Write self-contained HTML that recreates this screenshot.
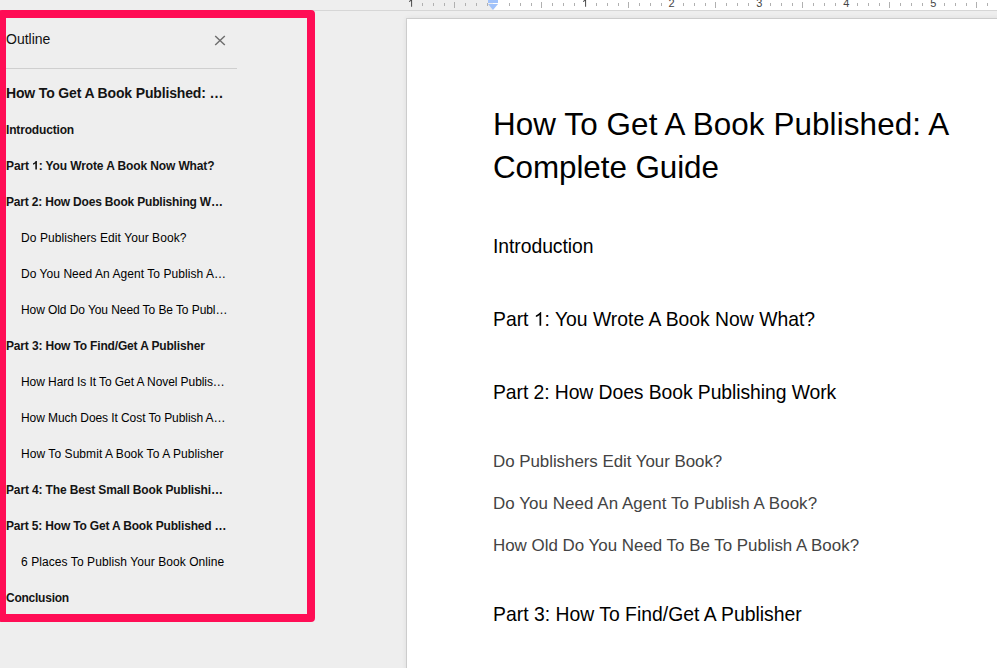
<!DOCTYPE html>
<html><head><meta charset="utf-8">
<style>
html,body{margin:0;padding:0;}
body{width:997px;height:668px;overflow:hidden;position:relative;background:#eeeeee;font-family:"Liberation Sans",sans-serif;}
.ruler{position:absolute;left:0;top:0;width:997px;height:10px;background:#eeeeee;}
.ruler .white{position:absolute;left:493px;top:0;right:0;height:10px;background:#fff;}
.rline{position:absolute;left:0;top:10px;width:997px;height:1px;background:#d6d6d6;}
.band{position:absolute;left:0;top:11px;width:997px;height:8px;background:#eeeeee;}
.tk{position:absolute;top:3px;width:1px;height:3px;background:#b0b0b0;}
.tk.big{top:2px;height:6px;}
.lab{position:absolute;top:-2.3px;width:20px;text-align:center;font-size:11px;line-height:11px;color:#444;}
.marker{position:absolute;left:488px;top:0;width:10px;height:3px;background:#a1c2fa;}
.tri{position:absolute;left:488px;top:4px;width:0;height:0;border-left:5px solid transparent;border-right:5px solid transparent;border-top:6px solid #a1c2fa;}
.page{position:absolute;left:407px;top:19px;width:700px;height:800px;background:#fff;box-shadow:0 0 0 1px rgba(0,0,0,0.10),0 0 5px 1px rgba(0,0,0,0.07);}
.dt{position:absolute;left:493px;white-space:nowrap;}
.frame{position:absolute;left:-2px;top:10px;width:301px;height:596px;border:8px solid #ff0d55;border-radius:4px;}
.title{position:absolute;left:6px;top:0;font-size:14px;line-height:14px;color:#111;}
.close{position:absolute;left:214px;top:35px;width:12px;height:11px;}
.one{position:absolute;top:0;}
.sep{position:absolute;left:6px;top:68px;width:231px;height:1px;background:#cfcfcf;}
.si{position:absolute;white-space:nowrap;color:#141414;}
.si.b{font-weight:bold;}
.si.r{color:#000;}
.g1{display:inline-block;width:0.5562em;height:0.7158em;vertical-align:baseline;fill:currentColor;}

</style></head><body>
<div class="ruler"><div class="white"></div>
<div class="tk" style="left:422px"></div>
<div class="tk" style="left:433px"></div>
<div class="tk" style="left:444px"></div>
<div class="tk big" style="left:454px"></div>
<div class="tk" style="left:465px"></div>
<div class="tk" style="left:476px"></div>
<div class="tk" style="left:487px"></div>
<div class="tk" style="left:509px"></div>
<div class="tk" style="left:520px"></div>
<div class="tk" style="left:531px"></div>
<div class="tk big" style="left:541px"></div>
<div class="tk" style="left:552px"></div>
<div class="tk" style="left:563px"></div>
<div class="tk" style="left:574px"></div>
<div class="tk" style="left:596px"></div>
<div class="tk" style="left:607px"></div>
<div class="tk" style="left:618px"></div>
<div class="tk big" style="left:628px"></div>
<div class="tk" style="left:639px"></div>
<div class="tk" style="left:650px"></div>
<div class="tk" style="left:661px"></div>
<div class="tk" style="left:683px"></div>
<div class="tk" style="left:694px"></div>
<div class="tk" style="left:705px"></div>
<div class="tk big" style="left:715px"></div>
<div class="tk" style="left:726px"></div>
<div class="tk" style="left:737px"></div>
<div class="tk" style="left:748px"></div>
<div class="tk" style="left:770px"></div>
<div class="tk" style="left:781px"></div>
<div class="tk" style="left:792px"></div>
<div class="tk big" style="left:802px"></div>
<div class="tk" style="left:813px"></div>
<div class="tk" style="left:824px"></div>
<div class="tk" style="left:835px"></div>
<div class="tk" style="left:857px"></div>
<div class="tk" style="left:868px"></div>
<div class="tk" style="left:879px"></div>
<div class="tk big" style="left:889px"></div>
<div class="tk" style="left:900px"></div>
<div class="tk" style="left:911px"></div>
<div class="tk" style="left:922px"></div>
<div class="tk" style="left:944px"></div>
<div class="tk" style="left:955px"></div>
<div class="tk" style="left:966px"></div>
<div class="tk big" style="left:976px"></div>
<div class="tk" style="left:987px"></div>
<svg class="one" style="left:407.59px;top:-0.874px" width="6.118" height="7.874" viewBox="0 0 1139 1466"><path fill="#444" transform="matrix(1 0 0 -1 0 1466)" d="M763 0L583 0L583 1147Q450 1010 196 928L196 1102Q400 1190 520 1300Q630 1400 680 1466L763 1466Z"/></svg>
<svg class="one" style="left:581.51px;top:-0.874px" width="6.118" height="7.874" viewBox="0 0 1139 1466"><path fill="#444" transform="matrix(1 0 0 -1 0 1466)" d="M763 0L583 0L583 1147Q450 1010 196 928L196 1102Q400 1190 520 1300Q630 1400 680 1466L763 1466Z"/></svg>
<div class="lab" style="left:661.59px">2</div>
<div class="lab" style="left:749.35px">3</div>
<div class="lab" style="left:836.31px">4</div>
<div class="lab" style="left:923.27px">5</div>
<div class="marker"></div><div class="tri"></div>
</div>
<div class="rline"></div>
<div class="band"></div>
<div class="page"></div>
<div class="dt" style="top:109.22px;font-size:31.4px;line-height:31.4px;color:#000;letter-spacing:0.103px">How To Get A Book Published: A</div>
<div class="dt" style="top:152.12px;font-size:31.4px;line-height:31.4px;color:#000;letter-spacing:-0.069px">Complete Guide</div>
<div class="dt" style="top:237.32px;font-size:19.35px;line-height:19.35px;color:#000;letter-spacing:-0.055px">Introduction</div>
<div class="dt" style="top:310.32px;font-size:19.35px;line-height:19.35px;color:#000;letter-spacing:-0.006px">Part <svg class="g1" style="margin-right:-0.006px" viewBox="0 0 1139 1466"><path transform="matrix(1 0 0 -1 0 1466)" d="M763 0L583 0L583 1147Q450 1010 196 928L196 1102Q400 1190 520 1300Q630 1400 680 1466L763 1466Z"/></svg>: You Wrote A Book Now What?</div>
<div class="dt" style="top:383.42px;font-size:19.35px;line-height:19.35px;color:#000;letter-spacing:-0.072px">Part 2: How Does Book Publishing Work</div>
<div class="dt" style="top:454.17px;font-size:16.93px;line-height:16.93px;color:#434343;letter-spacing:-0.043px">Do Publishers Edit Your Book?</div>
<div class="dt" style="top:496.07px;font-size:16.93px;line-height:16.93px;color:#434343;letter-spacing:0.068px">Do You Need An Agent To Publish A Book?</div>
<div class="dt" style="top:537.97px;font-size:16.93px;line-height:16.93px;color:#434343;letter-spacing:-0.005px">How Old Do You Need To Be To Publish A Book?</div>
<div class="dt" style="top:604.52px;font-size:19.35px;line-height:19.35px;color:#000;letter-spacing:0.015px">Part 3: How To Find/Get A Publisher</div>
<div class="title" style="top:32.15px">Outline</div>
<svg class="close" width="12" height="11" viewBox="0 0 12 11"><path d="M1.2 1.0 L10.8 10.0 M10.8 1.0 L1.2 10.0" stroke="#6e6e6e" stroke-width="1.45" fill="none"/></svg>
<div class="sep"></div>
<div class="si b" style="top:86.35px;left:6px;font-size:14px;line-height:14px;letter-spacing:-0.152px">How To Get A Book Published: …</div>
<div class="si b" style="top:123.74px;left:6px;font-size:12px;line-height:12px;letter-spacing:-0.164px">Introduction</div>
<div class="si b" style="top:159.74px;left:6px;font-size:12px;line-height:12px;letter-spacing:-0.118px">Part <svg class="g1" style="margin-right:-0.118px" viewBox="0 0 1139 1466"><path transform="matrix(1 0 0 -1 0 1466)" d="M841 0L566 0L566 1036Q400 880 172 818L172 1067Q300 1110 440 1200Q570 1300 618 1466L841 1466Z"/></svg>: You Wrote A Book Now What?</div>
<div class="si b" style="top:195.74px;left:6px;font-size:12px;line-height:12px;letter-spacing:-0.188px">Part 2: How Does Book Publishing W…</div>
<div class="si r" style="top:231.74px;left:21px;font-size:12px;line-height:12px;letter-spacing:0.071px">Do Publishers Edit Your Book?</div>
<div class="si r" style="top:267.74px;left:21px;font-size:12px;line-height:12px;letter-spacing:0.052px">Do You Need An Agent To Publish A…</div>
<div class="si r" style="top:303.74px;left:21px;font-size:12px;line-height:12px;letter-spacing:-0.079px">How Old Do You Need To Be To Publ…</div>
<div class="si b" style="top:339.74px;left:6px;font-size:12px;line-height:12px;letter-spacing:-0.159px">Part 3: How To Find/Get A Publisher</div>
<div class="si r" style="top:375.74px;left:21px;font-size:12px;line-height:12px;letter-spacing:-0.075px">How Hard Is It To Get A Novel Publis…</div>
<div class="si r" style="top:411.74px;left:21px;font-size:12px;line-height:12px;letter-spacing:-0.079px">How Much Does It Cost To Publish A…</div>
<div class="si r" style="top:447.74px;left:21px;font-size:12px;line-height:12px;letter-spacing:0.062px">How To Submit A Book To A Publisher</div>
<div class="si b" style="top:483.74px;left:6px;font-size:12px;line-height:12px;letter-spacing:-0.142px">Part 4: The Best Small Book Publishi…</div>
<div class="si b" style="top:519.74px;left:6px;font-size:12px;line-height:12px;letter-spacing:-0.175px">Part 5: How To Get A Book Published …</div>
<div class="si r" style="top:555.74px;left:21px;font-size:12px;line-height:12px;letter-spacing:0.077px">6 Places To Publish Your Book Online</div>
<div class="si b" style="top:591.74px;left:6px;font-size:12px;line-height:12px;letter-spacing:-0.244px">Conclusion</div>
<div class="frame"></div>
</body></html>
